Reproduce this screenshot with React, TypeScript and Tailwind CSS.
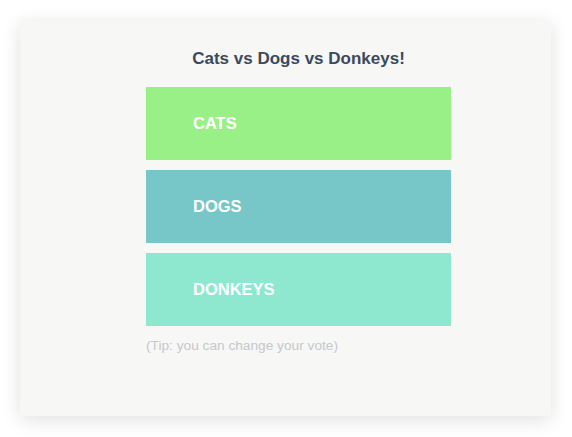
const options = [
  { label: "CATS", color: "bg-[#99f087]" },
  { label: "DOGS", color: "bg-[#77c6c8]" },
  { label: "DONKEYS", color: "bg-[#8ee8cf]" },
];

export default function App() {
  return (
    <div className="h-[437px] w-[572px] bg-white pt-5 pl-5 font-['Liberation_Sans',sans-serif]">
      <div className="h-[396px] w-[531px] bg-[#f7f7f5] shadow-[0_4px_18px_rgba(0,0,0,0.12)] pl-[126px] pt-[27px]">
        <div className="w-[305px]">
          <h1 className="text-center text-[17px] font-semibold text-[#3b4a5c] leading-[24px]">
            Cats vs Dogs vs Donkeys!
          </h1>
          <div className="mt-[16px] flex flex-col gap-[10px]">
            {options.map((o) => (
              <button
                key={o.label}
                className={`${o.color} h-[73px] w-full pl-[47px] text-left text-[16.5px] font-bold text-white`}
              >
                {o.label}
              </button>
            ))}
          </div>
          <p className="mt-[10px] text-[13.7px] text-[#c4c8cf]">(Tip: you can change your vote)</p>
        </div>
      </div>
    </div>
  );
}
